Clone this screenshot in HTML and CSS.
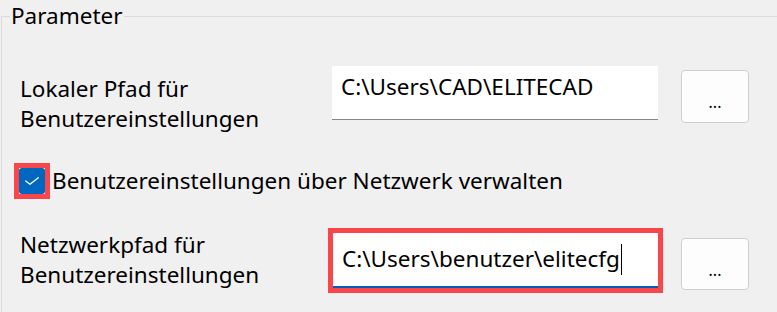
FILE: index.html
```html
<!DOCTYPE html>
<html lang="de">
<head>
    <meta charset="UTF-8">
    <title>Parameter</title>
    <link rel="stylesheet" href="styles.css">
</head>
<body>
    <fieldset class="group">
        <legend class="group-title">Parameter</legend>
        <div class="row row-local">
            <label class="caption">Lokaler Pfad für<br>Benutzereinstellungen</label>
            <div class="field">C:\Users\CAD\ELITECAD</div>
            <button class="browse">...</button>
        </div>
        <div class="check-row">
            <span class="marked check-frame">
                <span class="check">
                    <svg width="26" height="26" viewBox="0 0 26 26">
                        <path d="M6.7 13 L11 16.3 L19.3 9.7" fill="none" stroke="#fff" stroke-width="1.3" stroke-linecap="round" stroke-linejoin="round"/>
                    </svg>
                </span>
            </span>
            <span class="check-text">Benutzereinstellungen über Netzwerk verwalten</span>
        </div>
        <div class="row row-net">
            <label class="caption">Netzwerkpfad für<br>Benutzereinstellungen</label>
            <div class="field focused marked">C:\Users\benutzer\elitecfg<span class="caret"></span></div>
            <button class="browse">...</button>
        </div>
    </fieldset>
</body>
</html>
```

FILE: styles.css
```css
html,body{
    margin: 0;
    padding: 0;
    background: #f0f0f0;
    font: 22.5px/30px "Noto Sans","Open Sans",sans-serif;
    color: #000;
}
.group{
    margin: 2px -20px 0 1px;
    padding: 0 0 0 18px;
    border: 1px solid #dadada;
    border-bottom: none;
    height: 320px;
}
.group-title{
    padding: 0 1px;
    margin-left: -10px;
    line-height: 28px;
}
.row{
    display: grid;
    grid-template-columns: 289px 326px 68px;
    column-gap: 23px;
    align-items: start;
}
.row-local{
    margin-top: 36px;
}
.row-net{
    margin-top: 32px;
}
.caption{
    padding-top: 8px;
}
.field{
    background: #fff;
    border-bottom: 1px solid #868686;
    padding: 6px 9px 0;
    box-sizing: border-box;
    height: 54px;
    white-space: nowrap;
}
.row-net .caption{
    padding-top: 2px;
}
.row-net .field{
    margin: 5px 0 0 1px;
    height: 55px;
    padding-top: 11px;
    border-bottom: 2px solid #005fb8;
}
.caret{
    display: inline-block;
    width: 1px;
    height: 31px;
    background: #000;
    vertical-align: -8px;
    margin-left: 1px;
}
.marked{
    outline: 5px solid #f9464b;
}
.browse{
    margin-top: 4px;
    height: 53px;
    background: #fdfdfd;
    border: 1px solid #cfcfcf;
    border-radius: 4px;
    font: 16px "Noto Sans",sans-serif;
    padding: 11px 0 0;
    color: #000;
}
.row-net .browse{
    margin-top: 10px;
    height: 52px;
}
.check-row{
    display: flex;
    align-items: center;
    margin: 32px 0 0 -1px;
}
.check-frame{
    display: flex;
}
.check{
    width: 26px;
    height: 26px;
    border-radius: 3px;
    background: #0067c0;
    display: flex;
}
.check-text{
    margin-left: 7px;
}
```
